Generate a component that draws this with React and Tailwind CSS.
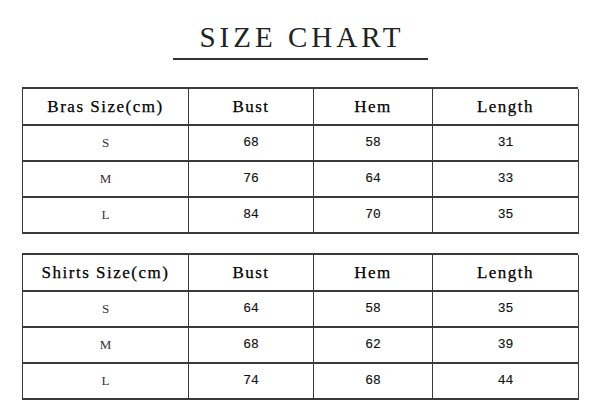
import React from "react";

const bras = {
  label: "Bras Size(cm)",
  rows: [
    ["S", "68", "58", "31"],
    ["M", "76", "64", "33"],
    ["L", "84", "70", "35"],
  ],
};

const shirts = {
  label: "Shirts Size(cm)",
  rows: [
    ["S", "64", "58", "35"],
    ["M", "68", "62", "39"],
    ["L", "74", "68", "44"],
  ],
};

const serif = { fontFamily: '"Liberation Serif", "DejaVu Serif", serif' };
const mono = { fontFamily: '"Liberation Mono", "DejaVu Sans Mono", monospace' };

const SizeTable = ({ label, rows }) => {
  const heads = [label, "Bust", "Hem", "Length"];

  return (
    <div className="grid grid-cols-[166px_125px_119px_146px] border-l border-t-2 border-[#3a3a3a]">
      {heads.map((h) => (
        <div
          key={h}
          className="h-[37px] flex items-center justify-center border-r border-b-2 border-[#3a3a3a] text-[17px] text-black tracking-[1.5px] [-webkit-text-stroke:0.25px_#000]"
          style={serif}
        >
          {h}
        </div>
      ))}
      {rows.map((row) =>
        row.map((cell, i) =>
          i === 0 ? (
            <div
              key={row[0] + i}
              className="h-[36px] flex items-center justify-center border-r border-b-2 border-[#3a3a3a] text-[13px] text-[#333]"
              style={serif}
            >
              {cell}
            </div>
          ) : (
            <div
              key={row[0] + i}
              className="h-[36px] flex items-center justify-center border-r border-b-2 border-[#3a3a3a] text-[13px] text-[#111] [-webkit-text-stroke:0.15px_#111]"
              style={mono}
            >
              {cell}
            </div>
          )
        )
      )}
    </div>
  );
};

export default function App() {
  return (
    <div className="w-[600px] h-[408px] bg-white overflow-hidden">
      <div className="flex flex-col items-center pt-[20px]">
        <div className="h-[34px] leading-[34px] text-[29px] tracking-[4px] pl-[4px] text-[#222]" style={serif}>
          SIZE CHART
        </div>
        <div className="mt-[4px] w-[255px] h-[2px] bg-[#333]" />
      </div>
      <div className="mx-[22px] mt-[27px] flex flex-col gap-[19px]">
        <SizeTable {...bras} />
        <SizeTable {...shirts} />
      </div>
    </div>
  );
}
